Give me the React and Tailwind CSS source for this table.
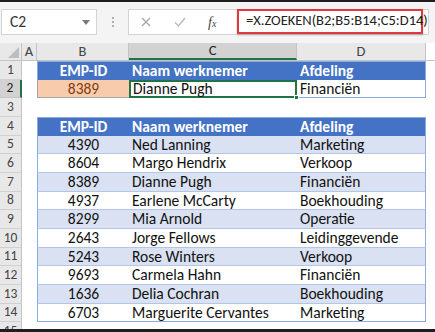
import React from 'react'

const font = "font-['Calibri','Carlito','Lato',sans-serif]"

const data = [
    ['4390', 'Ned Lanning', 'Marketing'],
    ['8604', 'Margo Hendrix', 'Verkoop'],
    ['8389', 'Dianne Pugh', 'Financiën'],
    ['4937', 'Earlene McCarty', 'Boekhouding'],
    ['8299', 'Mia Arnold', 'Operatie'],
    ['2643', 'Jorge Fellows', 'Leidinggevende'],
    ['5243', 'Rose Winters', 'Verkoop'],
    ['9693', 'Carmela Hahn', 'Financiën'],
    ['1636', 'Delia Cochran', 'Boekhouding'],
    ['6703', 'Marguerite Cervantes', 'Marketing'],
]

function RowNum({ n, active }) {
    return (
        <div
            className={
                active
                    ? 'w-[22px] shrink-0 flex items-center justify-center bg-[#d2d2d2] border-r-2 border-r-[#217346] border-b border-b-[#c4c4c4] text-[13.5px] text-[#222]'
                    : 'w-[22px] shrink-0 flex items-center justify-center bg-[#e8e8e8] border-r border-r-[#c4c4c4] border-b border-b-[#d0d0d0] text-[13.5px] text-[#444]'
            }
        >
            {n}
        </div>
    )
}

function Row({ n, active, children }) {
    return (
        <div className="flex h-[18.66px] shrink-0">
            <RowNum n={n} active={active} />
            <div className="w-[15px] shrink-0" />
            {children}
        </div>
    )
}

function HeaderCells({ top }) {
    return (
        <>
            <div className={`w-[92px] shrink-0 bg-[#4472c4] border-l border-l-[#8ea9db] flex items-center justify-center text-white font-bold text-[15.5px] ${top ? 'border-t border-t-[#8ea9db]' : ''}`}>
                EMP-ID
            </div>
            <div className={`w-[168px] shrink-0 bg-[#4472c4] flex items-center pl-[3px] text-white font-bold text-[15.5px] ${top ? 'border-t border-t-[#8ea9db]' : ''}`}>
                Naam werknemer
            </div>
            <div className={`w-[129px] shrink-0 bg-[#4472c4] border-r border-r-[#8ea9db] flex items-center pl-[3px] text-white font-bold text-[15.5px] ${top ? 'border-t border-t-[#8ea9db]' : ''}`}>
                Afdeling
            </div>
        </>
    )
}

export default function App() {
    return (
        <div className={`w-[435px] h-[332px] overflow-hidden bg-white border-t-2 border-b-[3px] border-[#1e1e1e] flex flex-col ${font}`}>
            {/* formula bar */}
            <div className="h-[41px] shrink-0 bg-[#f4f4f4] flex items-start pt-[7px]">
                <div className="ml-px w-[96px] h-[26px] bg-white border border-[#d4d4d4] flex items-center pl-[8px] pr-[6px]">
                    <span className="text-[15.5px] text-[#333] flex-1">C2</span>
                    <svg width="8" height="5" viewBox="0 0 8 5"><path d="M0 0h8L4 5z" fill="#7a7a7a" /></svg>
                </div>
                <div className="w-[31px] h-[26px] flex flex-col items-center justify-center gap-[2px]">
                    <span className="w-[2px] h-[2px] bg-[#b0b0b0]" />
                    <span className="w-[2px] h-[2px] bg-[#b0b0b0]" />
                    <span className="w-[2px] h-[2px] bg-[#b0b0b0]" />
                </div>
                <div className="w-[301px] h-[26px] bg-white border border-[#d4d4d4] flex items-center">
                    <div className="w-[108px] flex items-center">
                        <svg className="ml-[12px]" width="10" height="10" viewBox="0 0 10 10"><path d="M1 1l8 8M9 1L1 9" stroke="#a6a6a6" strokeWidth="1.3" /></svg>
                        <svg className="ml-[23px]" width="12" height="10" viewBox="0 0 12 10"><path d="M1 5.5l3.5 3.5L11 1" stroke="#b8b8b8" strokeWidth="1.3" fill="none" /></svg>
                        <span className="ml-[22px] text-[14px] italic text-[#444] font-['Liberation_Serif',serif]">f<span className="text-[10px]">x</span></span>
                    </div>
                    <div className="-mt-[2px] w-[186px] h-[25px] border-2 border-[#e0383e] shadow-[0_1px_2px_rgba(0,0,0,0.25)] bg-white flex items-center pl-[7px] text-[14.5px] text-[#222] whitespace-nowrap">
                        =X.ZOEKEN(B2;B5:B14;C5:D14)
                    </div>
                </div>
            </div>

            {/* column headers */}
            <div className="flex h-[18px] shrink-0 bg-[#e8e8e8] border-b border-b-[#c4c4c4] text-[14.5px] text-[#444]">
                <div className="w-[22px] shrink-0 border-r border-r-[#c4c4c4] flex items-end justify-end p-[2px]">
                    <svg width="11" height="11" viewBox="0 0 11 11"><path d="M11 0V11H0z" fill="#bdbdbd" /></svg>
                </div>
                <div className="w-[15px] shrink-0 border-r border-r-[#c4c4c4] flex items-center justify-center">A</div>
                <div className="w-[92px] shrink-0 border-r border-r-[#c4c4c4] flex items-center justify-center">B</div>
                <div className="w-[168px] shrink-0 bg-[#d2d2d2] border-b-2 border-b-[#217346] border-r border-r-[#c4c4c4] flex items-center justify-center text-[#222]">C</div>
                <div className="w-[129px] shrink-0 border-r border-r-[#c4c4c4] flex items-center justify-center">D</div>
                <div className="flex-1 bg-white" />
            </div>

            {/* sheet */}
            <div className="flex flex-col text-[15.5px] text-[#111]">
                <Row n={1}>
                    <HeaderCells top />
                </Row>
                <Row n={2} active>
                    <div className="w-[92px] shrink-0 bg-[#f8cbad] border-l border-b border-[#a5a5a5] flex items-center justify-center text-[#843c0c]">8389</div>
                    <div className="relative w-[168px] shrink-0 border-2 border-[#217346] flex items-center pl-[2px]">
                        Dianne Pugh
                        <span className="absolute -right-[4px] -bottom-[4px] w-[5px] h-[5px] bg-[#217346] border border-white" />
                    </div>
                    <div className="w-[129px] shrink-0 border-r border-b border-[#8ea9db] flex items-center pl-[3px]">Financiën</div>
                </Row>
                <Row n={3} />
                <Row n={4}>
                    <HeaderCells top />
                </Row>
                {data.map((r, i) => {
                    const band = i % 2 === 0 ? 'bg-[#d9e1f2]' : 'bg-white'
                    const last = i === data.length - 1 ? 'border-b border-b-[#8ea9db]' : 'border-b border-b-[#b4c6e7]'
                    return (
                        <Row n={i + 5} key={i}>
                            <div className={`w-[92px] shrink-0 ${band} ${last} border-l border-l-[#8ea9db] flex items-center justify-center`}>{r[0]}</div>
                            <div className={`w-[168px] shrink-0 ${band} ${last} flex items-center pl-[3px] whitespace-nowrap`}>{r[1]}</div>
                            <div className={`w-[129px] shrink-0 ${band} ${last} border-r border-r-[#8ea9db] flex items-center pl-[3px]`}>{r[2]}</div>
                        </Row>
                    )
                })}
                <Row n={15} />
            </div>
        </div>
    )
}
